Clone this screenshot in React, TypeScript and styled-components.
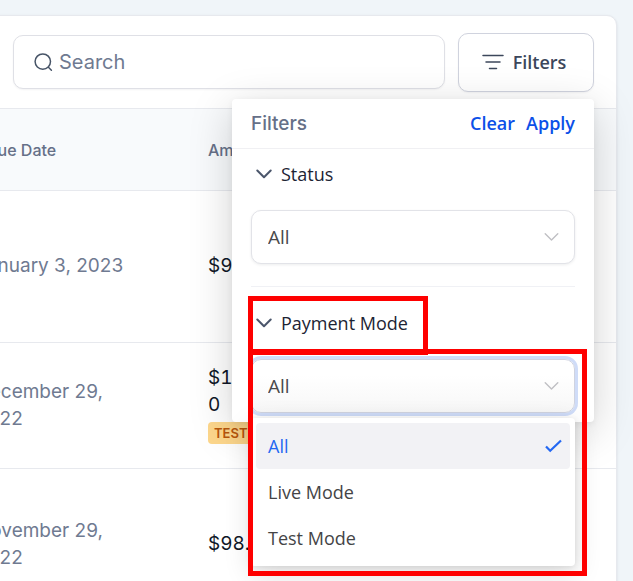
import React from "react";
import styled, { createGlobalStyle, css } from "styled-components";

const GlobalStyle = createGlobalStyle`
  *, *::before, *::after { box-sizing: border-box; }
  html, body { margin: 0; padding: 0; background: #f0f5f9; }
  body { font-family: Inter, sans-serif; color: #101828; }
  button, input, select { font: inherit; color: inherit; margin: 0; }
`;

const ui = `"Open Sans", "Noto Sans", sans-serif`;

const Page = styled.main`
  height: 100vh;
  overflow: hidden;
  padding: 15px 16px 0 0;
`;

const Card = styled.section`
  margin-left: -64px;
  background: #fff;
  border: 1px solid #e7e9ee;
  border-radius: 10px;
  box-shadow: 0 1px 3px rgba(16, 24, 40, 0.1);
`;

const Toolbar = styled.div`
  display: flex;
  align-items: center;
  gap: 13px;
  height: 92px;
  padding: 0 22px 0 76px;
`;

const SearchBox = styled.label`
  flex: 1;
  min-width: 0;
  display: flex;
  align-items: center;
  gap: 6px;
  height: 54px;
  padding: 0 20px;
  background: #fff;
  border: 1px solid #dfe0e6;
  border-radius: 10px;
  box-shadow: 0 1px 2px rgba(16, 24, 40, 0.05);
  color: #475467;
`;

const SearchInput = styled.input`
  flex: 1;
  min-width: 0;
  padding: 0;
  border: 0;
  outline: 0;
  background: transparent;
  font-size: 20px;
  &::placeholder { color: #6f7a91; opacity: 1; }
`;

const FilterAnchor = styled.div`
  position: relative;
`;

const FilterButton = styled.button`
  display: flex;
  align-items: center;
  justify-content: center;
  gap: 9px;
  width: 136px;
  height: 59px;
  padding: 0 4px 0 0;
  background: #fff;
  border: 1px solid #d0d3de;
  border-radius: 10px;
  box-shadow: 0 1px 2px rgba(16, 24, 40, 0.05);
  font-family: ${ui};
  font-size: 18px;
  font-weight: 600;
  color: #3c475b;
`;

const Panel = styled.div`
  position: absolute;
  top: 66px;
  right: 0;
  z-index: 2;
  width: 362px;
  height: 323px;
  background: #fff;
  border-radius: 4px;
  box-shadow: 0 10px 44px rgba(0, 0, 0, 0.18), 0 2px 6px rgba(0, 0, 0, 0.06);
  font-family: ${ui};
`;

const PanelHead = styled.header`
  display: flex;
  align-items: center;
  gap: 11px;
  height: 50px;
  padding: 0 19px;
  border-bottom: 1px solid #f0f0f3;
`;

const PanelTitle = styled.h2`
  flex: 1;
  margin: 0;
  font-family: Inter, sans-serif;
  font-size: 19px;
  font-weight: 500;
  color: #667088;
`;

const TextButton = styled.button`
  padding: 0;
  border: 0;
  background: none;
  font-size: 18px;
  font-weight: 600;
  color: #0c50e8;
`;

const Group = styled.section`
  position: relative;
  margin: 0 19px;
  padding-bottom: 22px;
  & + & { border-top: 1px solid #f0f1f5; padding: 11px 0 0; }
`;

const GroupToggle = styled.button`
  display: flex;
  align-items: center;
  gap: 9px;
  height: 50px;
  padding: 0 0 0 5px;
  border: 0;
  background: none;
  font-size: 18px;
  color: #1d2434;
`;

const SelectWrap = styled.div<{ $focused?: boolean }>`
  display: flex;
  align-items: center;
  position: relative;
  height: 54px;
  margin-top: 11px;
  background: #fff;
  border: 1px solid #e2e3e8;
  border-radius: 10px;
  box-shadow: 0 1px 3px rgba(16, 24, 40, 0.08);
  ${(p) =>
    p.$focused &&
    css`
      border-color: #cfd3e0;
      box-shadow: 0 0 0 3px #cfdcf8;
      background: linear-gradient(#fff 30%, #f7f7f7);
    `}
`;

const Select = styled.select`
  appearance: none;
  flex: 1;
  height: 100%;
  padding: 0 16px;
  border: 0;
  outline: 0;
  background: transparent;
  font-size: 19px;
  color: #4a4a4c;
`;

const SelectArrow = styled.span`
  position: absolute;
  right: 15px;
  display: flex;
  color: #c0c0c4;
  pointer-events: none;
`;

const Menu = styled.ul`
  position: absolute;
  top: 131px;
  left: 0;
  right: 0;
  z-index: 3;
  margin: 0;
  padding: 5px;
  list-style: none;
  background: #fff;
  border-radius: 4px;
  box-shadow: 0 8px 28px rgba(0, 0, 0, 0.14), 0 1px 6px rgba(0, 0, 0, 0.1);
`;

const Option = styled.li<{ $selected?: boolean }>`
  display: flex;
  align-items: center;
  justify-content: space-between;
  height: 46px;
  padding: 0 8px 0 12px;
  border-radius: 4px;
  font-size: 18px;
  color: ${(p) => (p.$selected ? "#2468f2" : "#444446")};
  background: ${(p) => (p.$selected ? "#f2f2f5" : "transparent")};
`;

const Highlight = styled.div<{ $top: number; $right: number; $height: number }>`
  position: absolute;
  left: -3px;
  top: ${(p) => p.$top}px;
  right: ${(p) => p.$right}px;
  height: ${(p) => p.$height}px;
  z-index: 4;
  border: 5px solid #fe0000;
  pointer-events: none;
`;

const Table = styled.table`
  width: 100%;
  border-collapse: collapse;
  table-layout: fixed;
`;

const DateCol = styled.col`
  width: 255px;
`;

const HeadCell = styled.th`
  height: 82px;
  padding: 0 16px 0 49px;
  border-top: 1px solid #e7e9ee;
  border-bottom: 1px solid #e7e9ee;
  background: #f8fafc;
  text-align: left;
  font-size: 16px;
  font-weight: 500;
  color: #667088;
  & + & { padding-left: 16px; }
`;

const Row = styled.tr<{ $height: number }>`
  height: ${(p) => p.$height}px;
  border-bottom: 1px solid #e7e9ee;
`;

const DateCell = styled.td`
  padding: 0 40px 2px 39px;
  font-size: 19px;
  line-height: 27px;
  color: #6f7a91;
`;

const AmountCell = styled.td`
  padding: 0 16px 3px;
  font-size: 19px;
  line-height: 27px;
  font-variant-numeric: tabular-nums;
  color: #101828;
`;

const Badge = styled.span`
  display: block;
  width: 60px;
  margin-top: 4px;
  padding: 0 6px;
  border-radius: 4px;
  background: #fdd78c;
  font-size: 13px;
  font-weight: 600;
  line-height: 22px;
  color: #b9570c;
`;

const SearchIcon = () => (
  <svg width="19" height="20" viewBox="0 0 19 20" fill="none" stroke="currentColor" strokeWidth="1.5" strokeLinecap="round">
    <circle cx="8.8" cy="9.6" r="7.7" />
    <path d="M14.4 15.2L17.4 18.2" />
  </svg>
);

const LinesIcon = () => (
  <svg width="22" height="16" viewBox="0 0 22 16" fill="none" stroke="currentColor" strokeWidth="1.5" strokeLinecap="round">
    <path d="M1 1.5H21M4 8H18M7.5 14.5H14.5" />
  </svg>
);

const Chevron = ({ width = 16, stroke = 2 }: { width?: number; stroke?: number }) => (
  <svg width={width} height="10" viewBox="0 0 16 10" fill="none" stroke="currentColor" strokeWidth={stroke} strokeLinecap="round" strokeLinejoin="round">
    <path d="M1.3 1.5L8 8.2L14.7 1.5" />
  </svg>
);

const Check = () => (
  <svg width="17" height="14" viewBox="0 0 17 14" fill="none" stroke="currentColor" strokeWidth="2.2">
    <path d="M1 7.5L5.2 11.8L16 1.5" />
  </svg>
);

const ToggleMark = styled.span`
  display: flex;
  color: #4b566b;
`;

const modes = ["All", "Live Mode", "Test Mode"];

function FiltersPanel() {
  return (
    <Panel role="dialog" aria-label="Filters">
      <PanelHead>
        <PanelTitle>Filters</PanelTitle>
        <TextButton type="button">Clear</TextButton>
        <TextButton type="button">Apply</TextButton>
      </PanelHead>
      <Group>
        <GroupToggle type="button" aria-expanded="true">
          <ToggleMark><Chevron /></ToggleMark>
          Status
        </GroupToggle>
        <SelectWrap>
          <Select aria-label="Status" defaultValue="All">
            <option>All</option>
          </Select>
          <SelectArrow><Chevron width={15} stroke={1.5} /></SelectArrow>
        </SelectWrap>
      </Group>
      <Group>
        <GroupToggle type="button" aria-expanded="true">
          <ToggleMark><Chevron /></ToggleMark>
          Payment Mode
        </GroupToggle>
        <SelectWrap $focused>
          <Select aria-label="Payment Mode" defaultValue="All">
            {modes.map((m) => <option key={m}>{m}</option>)}
          </Select>
          <SelectArrow><Chevron width={15} stroke={1.5} /></SelectArrow>
        </SelectWrap>
        <Menu role="listbox" aria-label="Payment Mode">
          {modes.map((m, i) => (
            <Option key={m} role="option" aria-selected={i === 0} $selected={i === 0}>
              {m}
              {i === 0 && <Check />}
            </Option>
          ))}
        </Menu>
        <Highlight $top={9} $right={147} $height={59} />
        <Highlight $top={62} $right={-12} $height={227} />
      </Group>
    </Panel>
  );
}

export default function App() {
  return (
    <>
      <GlobalStyle />
      <Page>
        <Card>
          <Toolbar>
            <SearchBox>
              <SearchIcon />
              <SearchInput type="text" placeholder="Search" aria-label="Search" />
            </SearchBox>
            <FilterAnchor>
              <FilterButton type="button" aria-expanded="true">
                <LinesIcon />
                Filters
              </FilterButton>
              <FiltersPanel />
            </FilterAnchor>
          </Toolbar>
          <Table>
            <colgroup>
              <DateCol />
              <col />
            </colgroup>
            <thead>
              <tr>
                <HeadCell scope="col">Due Date</HeadCell>
                <HeadCell scope="col">Amount</HeadCell>
              </tr>
            </thead>
            <tbody>
              <Row $height={152}>
                <DateCell>January 3, 2023</DateCell>
                <AmountCell>$98.00</AmountCell>
              </Row>
              <Row $height={126}>
                <DateCell>December 29,<br />2022</DateCell>
                <AmountCell>$100.0<br />0<Badge>TEST</Badge></AmountCell>
              </Row>
              <Row $height={152}>
                <DateCell>November 29,<br />2022</DateCell>
                <AmountCell>$98.00</AmountCell>
              </Row>
            </tbody>
          </Table>
        </Card>
      </Page>
    </>
  );
}
